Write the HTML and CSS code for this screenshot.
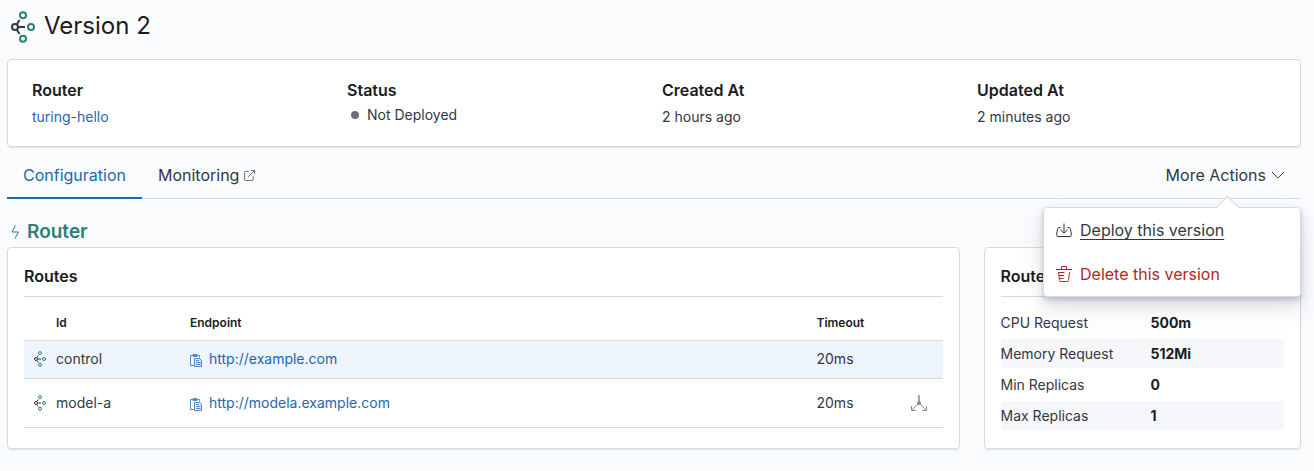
FILE: index.html
```html
<!DOCTYPE html>
<html lang="en">
<head>
<meta charset="utf-8">
<title>Version 2</title>
<meta name="viewport" content="width=device-width, initial-scale=1">
<link rel="stylesheet" href="styles.css">
</head>
<body>
<svg class="sprite" aria-hidden="true">
  <symbol id="graph" viewBox="0 0 24 32">
    <g fill="none" stroke="#343741" stroke-width="2">
      <circle cx="4" cy="16" r="3"/>
      <path d="M7 16H14M6 13L8.500 9M6 19L8.500 23"/>
    </g>
    <g fill="none" stroke="#2c8173" stroke-width="2">
      <circle cx="12" cy="4.300" r="3"/>
      <circle cx="20" cy="16" r="3"/>
      <circle cx="12" cy="27.700" r="3"/>
    </g>
  </symbol>
  <symbol id="paste" viewBox="0 0 12 13">
    <g fill="none" stroke="currentColor">
      <path d="M4 11.500H.5V1.500H9.500V3.500M3 1.500V2.500H7V.5H3Z"/>
      <path fill="currentColor" fill-opacity=".15" d="M4.500 4.500H9.500L11.500 6.500V12.500H4.500Z"/>
      <path d="M6 6.500H9M6 8.500H10.500M6 10.500H10.500"/>
    </g>
  </symbol>
</svg>

<main class="page">
  <header class="title">
    <svg class="title-icon" aria-hidden="true"><use href="#graph"/></svg>
    <h1>Version 2</h1>
  </header>

  <dl class="panel summary">
    <div><dt>Router</dt><dd><a href="#router">turing-hello</a></dd></div>
    <div><dt>Status</dt><dd class="status">Not Deployed</dd></div>
    <div><dt>Created At</dt><dd>2 hours ago</dd></div>
    <div><dt>Updated At</dt><dd>2 minutes ago</dd></div>
  </dl>

  <nav class="tabs">
    <a class="tab tab-selected" href="#configuration">Configuration</a>
    <a class="tab" href="#monitoring">Monitoring
      <svg width="11" height="11" viewBox="0 0 12 12" fill="none" stroke="#535966" aria-hidden="true"><path d="M5 1.500H2Q.5 1.500 .5 3V10Q.5 11.500 2 11.500H8.500Q10 11.500 10 10V7M4.500 7.500L11 1M7.500 .5H11.500V4.500"/></svg>
    </a>
    <div class="actions">
      <button class="tab" type="button" aria-expanded="true">More Actions
        <svg width="14" height="8" viewBox="0 0 14 8" fill="none" stroke="currentColor" aria-hidden="true"><path d="M1 1L6.300 6.500Q7 7 7.700 6.500L13 1"/></svg>
      </button>
      <div class="menu">
        <button class="menu-item" type="button">
          <svg width="16" height="16" viewBox="0 0 16 16" fill="none" stroke="currentColor" aria-hidden="true"><path d="M4.500 5.500H3Q2 5.500 1.800 6.500L.8 11V13.500Q.8 14.500 1.800 14.500H14.200Q15.200 14.500 15.200 13.500V11L14.200 6.500Q14 5.500 13 5.500H11.500M8 1.500V11M4.500 8L8 11.300L11.500 8"/></svg>
          <span class="underlined">Deploy this version</span>
        </button>
        <button class="menu-item menu-item-danger" type="button">
          <svg width="16" height="16" viewBox="0 0 16 16" fill="none" stroke="currentColor" aria-hidden="true"><path d="M0 3.500H16M5.500 3.500V.5H10.500V3.500M2.500 6L3.500 14.500Q3.600 15.500 4.500 15.500H11.500Q12.400 15.500 12.500 14.500L13.500 6M2.500 6.500H8.500M3 9.500H8M3.300 12.500H7.500"/></svg>
          <span>Delete this version</span>
        </button>
      </div>
    </div>
  </nav>

  <h2 class="section-title" id="router">
    <svg width="9" height="14" viewBox="0 0 9 14" fill="none" stroke="currentColor" aria-hidden="true"><path d="M4.500 .5L1 7H7.500L4 13.500"/></svg>
    Router
  </h2>

  <div class="columns">
    <section class="panel card routes">
      <h3>Routes</h3>
      <table class="route-table">
        <thead>
          <tr><th class="col-icon"></th><th class="col-id">Id</th><th>Endpoint</th><th class="col-timeout">Timeout</th><th class="col-action"></th></tr>
        </thead>
        <tbody>
          <tr class="highlight">
            <td class="col-icon"><svg class="route-icon" aria-hidden="true"><use href="#graph"/></svg></td>
            <td>control</td>
            <td><a class="endpoint" href="#control"><svg class="paste-icon" aria-hidden="true"><use href="#paste"/></svg>http://example.com</a></td>
            <td>20ms</td>
            <td class="col-action"></td>
          </tr>
          <tr class="tall">
            <td class="col-icon"><svg class="route-icon" aria-hidden="true"><use href="#graph"/></svg></td>
            <td>model-a</td>
            <td><a class="endpoint" href="#model-a"><svg class="paste-icon" aria-hidden="true"><use href="#paste"/></svg>http://modela.example.com</a></td>
            <td>20ms</td>
            <td class="col-action"><svg width="16" height="16" viewBox="0 0 16 16" fill="none" stroke="#8a8a8a" aria-hidden="true"><path stroke-width="1.500" d="M8 0V8"/><path d="M8 8L1 15M8 8L15 15M.5 11V15.500H5M11 15.500H15.500V11"/><circle cx="8" cy="8" r="1.500" fill="#8a8a8a"/></svg></td>
          </tr>
        </tbody>
      </table>
    </section>

    <section class="panel card">
      <h3>Router</h3>
      <dl class="specs">
        <div><dt>CPU Request</dt><dd>500m</dd></div>
        <div><dt>Memory Request</dt><dd>512Mi</dd></div>
        <div><dt>Min Replicas</dt><dd>0</dd></div>
        <div><dt>Max Replicas</dt><dd>1</dd></div>
      </dl>
    </section>
  </div>
</main>
</body>
</html>
```
FILE: styles.css
```css
* { box-sizing: border-box; }

body {
  margin: 0;
  background: #fafbfd;
  color: #343741;
  font: 14px/20px Inter, "Liberation Sans", sans-serif;
}

h1, h2, h3, dl, dd { margin: 0; }
a { color: #2168b0; text-decoration: none; }
button { border: 0; background: none; font: inherit; color: inherit; cursor: pointer; }
.sprite { position: absolute; width: 0; height: 0; }

.page { padding: 8px 13px 16px 7px; }

.title {
  display: flex;
  align-items: center;
  gap: 9px;
  padding-left: 4px;
  margin-bottom: 16px;
}
.title h1 { font-size: 24px; line-height: 35px; font-weight: 400; color: #1a1c21; }
.title-icon { width: 24px; height: 32px; margin-top: 3px; }

.panel {
  background: #fff;
  border: 1px solid #d3dae6;
  border-radius: 4px;
  box-shadow: 0 2px 2px -1px rgba(152, 162, 179, .3);
}

.summary {
  display: grid;
  grid-template-columns: repeat(4, 1fr);
  gap: 16px;
  padding: 18px 24px 19px;
}
.summary dt { font-size: 16px; line-height: 24px; font-weight: 600; color: #1a1c21; }
.summary dd { padding-top: 5px; line-height: 20px; }
.summary .status { display: flex; align-items: center; gap: 8px; padding: 3px 0 0 4px; }
.status::before { content: ""; width: 8px; height: 8px; border-radius: 50%; background: #69707d; }

.tabs {
  display: flex;
  margin-top: 4px;
  border-bottom: 1px solid #d3dae6;
  font-size: 16px;
  line-height: 24px;
}
.tab {
  display: flex;
  align-items: center;
  gap: 5px;
  padding: 12px 16px 10px;
  margin-bottom: -1px;
  border-bottom: 2px solid transparent;
  color: #343741;
}
.tab-selected { color: #2168b0; border-color: #2168b0; }
.actions { position: relative; margin-left: auto; }

.menu {
  position: absolute;
  z-index: 1;
  top: 56px;
  right: 0;
  width: 258px;
  border: 1px solid #d3dae6;
  border-radius: 4px;
  background: #fff;
  box-shadow: 0 12px 24px rgba(65, 78, 101, .12), 0 6px 12px rgba(65, 78, 101, .12), 0 3px 4px rgba(65, 78, 101, .2);
}
.menu::before {
  content: "";
  position: absolute;
  top: -9px;
  right: 64px;
  width: 16px;
  height: 16px;
  border: solid #d3dae6;
  border-width: 1px 0 0 1px;
  background: linear-gradient(135deg, #fff 50%, transparent 50%);
  transform: rotate(45deg);
}
.menu-item {
  display: flex;
  align-items: center;
  gap: 8px;
  width: 100%;
  padding: 10px 12px;
  text-align: left;
}
.menu-item-danger { color: #b4251d; }
.underlined { text-decoration: underline; text-underline-offset: 3px; }

.section-title {
  display: flex;
  align-items: center;
  gap: 7px;
  padding: 20px 0 3px 4px;
  font-size: 19px;
  line-height: 25px;
  font-weight: 600;
  color: #2c8173;
}

.columns { display: grid; grid-template-columns: 3fr 1fr; gap: 24px; }
.card { padding: 16px; }
.card h3 {
  padding-bottom: 8px;
  border-bottom: 1px solid #d3dae6;
  font-size: 16px;
  line-height: 24px;
  font-weight: 600;
  color: #1a1c21;
}
.routes { padding-bottom: 20px; }

.route-table { width: 100%; border-collapse: collapse; table-layout: fixed; margin-top: 7px; }
.route-table th {
  height: 36px;
  padding: 2px 8px 0;
  font-size: 12px;
  font-weight: 600;
  text-align: left;
  color: #1a1c21;
}
.route-table td { height: 38px; padding: 0 8px; }
.route-table .tall td { height: 49px; }
.route-table tr { border-bottom: 1px solid #d3dae6; }
.route-table .highlight { background: #eef4fc; }
.route-table .col-icon { width: 24px; padding: 0 0 0 10px; }
.route-table .col-id { width: 134px; }
.route-table .col-timeout { width: 94px; }
.route-table .col-action { width: 40px; }
.route-icon { display: block; width: 12px; height: 16px; }
.col-action svg { display: block; }
.endpoint { display: flex; align-items: center; gap: 7px; }
.paste-icon { width: 12px; height: 13px; margin-top: 3px; opacity: .75; }

.specs { display: grid; gap: 2px; margin-top: 11px; }
.specs div { display: grid; grid-template-columns: 150px 1fr; line-height: 29px; }
.specs div:nth-child(even) { background: #f5f7fa; }
.specs dd { font-weight: 700; color: #1a1c21; }
```
